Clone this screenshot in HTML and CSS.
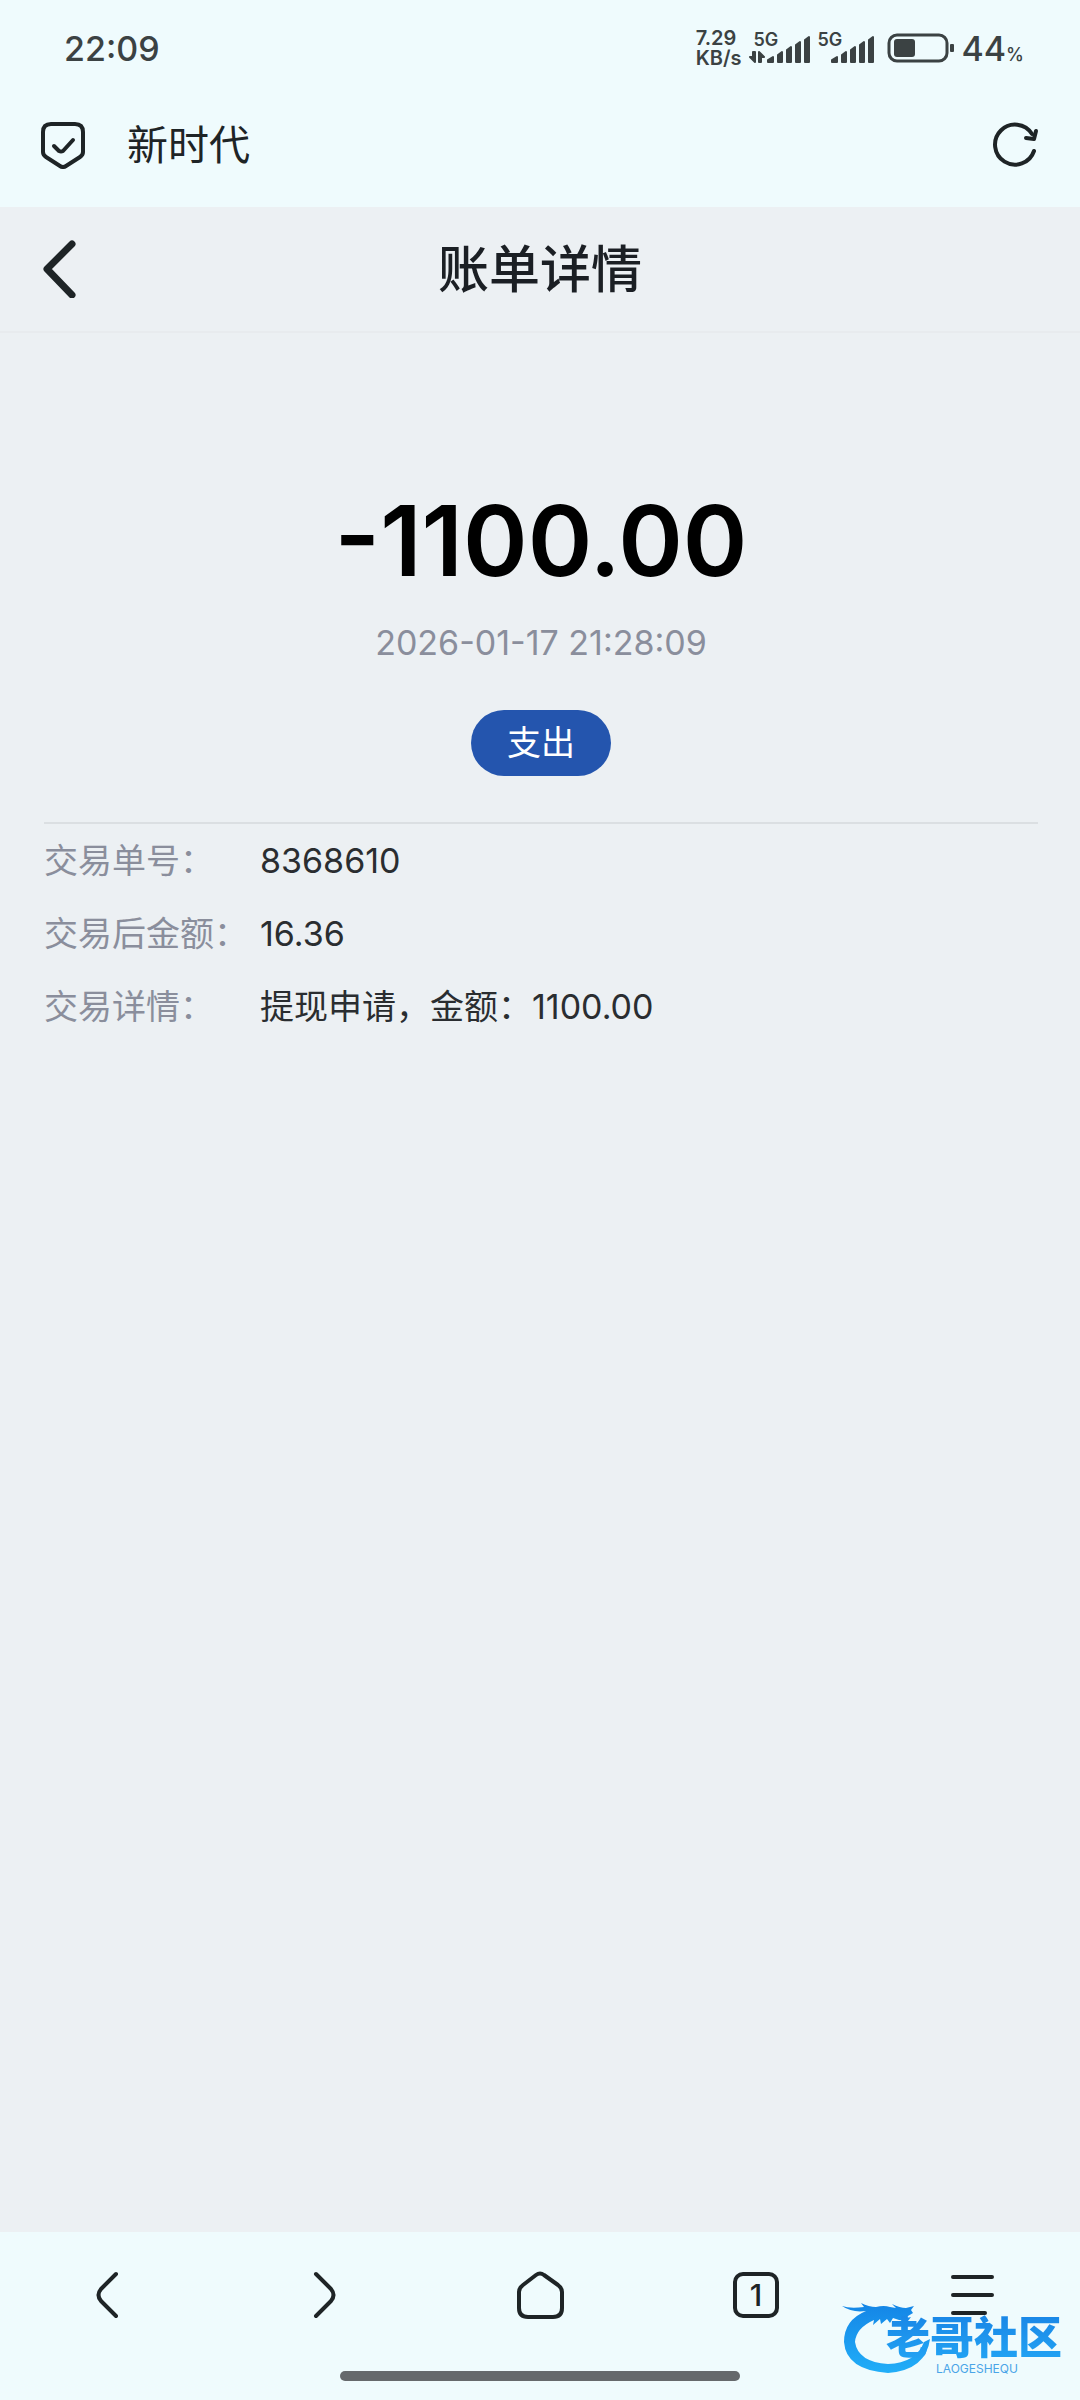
FILE: index.html
```html
<!DOCTYPE html>
<html lang="zh-CN">
<head>
    <meta charset="UTF-8">
    <meta name="viewport" content="width=device-width, initial-scale=1.0">
    <title>账单详情</title>
    <link rel="stylesheet" href="styles.css">
</head>
<body>
    <div class="status-bar">
        <span class="clock">22:09</span>
        <div class="status-right">
            <div class="speed">
                <span>7.29</span>
                <span>KB/s</span>
            </div>
            <div class="signal">
                <span class="signal-text">5G</span>
                <svg width="60" height="34" viewBox="0 0 60 34">
                    <path d="M4 21v10l-5-5h3v-5zM8 31v-10l5 5h-3v5z" class="signal-bars"/>
                    <path d="M17 31v-2l5-3v5zM27 31v-7l4-3v10zM36 31v-12l4-3v15zM45 31v-17l4-3v20zM54 31v-22l4-3v25z" class="signal-bars"/>
                </svg>
            </div>
            <div class="signal">
                <span class="signal-text">5G</span>
                <svg width="60" height="34" viewBox="0 0 60 34">
                    <path d="M17 31v-2l5-3v5zM27 31v-7l4-3v10zM36 31v-12l4-3v15zM45 31v-17l4-3v20zM54 31v-22l4-3v25z" class="signal-bars"/>
                </svg>
            </div>
            <svg class="battery" width="68" height="30" viewBox="0 0 68 30">
                <rect x="2" y="2" width="58" height="26" rx="8" fill="none" stroke="#3b4243" stroke-width="3"/>
                <rect x="7" y="6" width="21" height="18" rx="3" fill="#3b4243"/>
                <rect x="63" y="11" width="4" height="8" rx="1" fill="#3b4243"/>
            </svg>
            <span class="percent">44<small>%</small></span>
        </div>
    </div>

    <div class="address-bar">
        <svg width="44" height="48" viewBox="0 0 44 48" class="icon">
            <path d="M10 3h24q8 0 8 8v20q0 3-3 5L25 45q-3 2-6 0L5 36q-3-2-3-5V11q0-8 8-8z"/>
            <path d="M13 25l5 5q2 1 4 0L32 19"/>
        </svg>
        <span class="site-name">新时代</span>
        <button type="button" class="icon-button" aria-label="刷新">
            <svg width="46" height="46" viewBox="0 0 46 46" class="icon">
                <path d="M41 29A20 20 0 1 1 39 12"/>
                <path d="M43 9l-2 8-8-1"/>
            </svg>
        </button>
    </div>

    <header class="page-header">
        <button type="button" class="icon-button" aria-label="返回">
            <svg width="34" height="58" viewBox="0 0 34 58" class="icon icon-back">
                <path d="M30 4L5 29l25 26"/>
            </svg>
        </button>
        <h1>账单详情</h1>
    </header>

    <main class="bill">
        <div class="summary">
            <p class="amount">-1100.00</p>
            <p class="date">2026-01-17 21:28:09</p>
            <span class="tag">支出</span>
        </div>
        <dl class="details">
            <dt>交易单号：</dt>
            <dd>8368610</dd>
            <dt>交易后金额：</dt>
            <dd>16.36</dd>
            <dt>交易详情：</dt>
            <dd>提现申请，金额：1100.00</dd>
        </dl>
    </main>

    <footer class="bottom">
        <nav class="tabs">
            <button type="button" class="icon-button" aria-label="后退">
                <svg width="48" height="48" viewBox="0 0 48 48" class="icon">
                    <path d="M32 3L17 18q-5 6 0 12l15 15"/>
                </svg>
            </button>
            <button type="button" class="icon-button" aria-label="前进">
                <svg width="48" height="48" viewBox="0 0 48 48" class="icon">
                    <path d="M16 3l15 15q5 6 0 12L16 45"/>
                </svg>
            </button>
            <button type="button" class="icon-button" aria-label="主页">
                <svg width="48" height="48" viewBox="0 0 48 48" class="icon">
                    <path d="M20 4q4-3 8 0l14 10q4 3 4 7v16q0 9-9 9H12q-9 0-9-9V21q0-4 4-7z"/>
                </svg>
            </button>
            <button type="button" class="icon-button" aria-label="标签页">
                <span class="tab-count">1</span>
            </button>
            <button type="button" class="icon-button" aria-label="菜单">
                <svg width="48" height="48" viewBox="0 0 48 48" class="icon">
                    <path d="M5 6h39M5 24h39M5 42h32"/>
                </svg>
            </button>
        </nav>
        <div class="home-indicator"></div>
        <div class="watermark">
            <svg width="90" height="72" viewBox="0 0 90 72">
                <defs>
                    <linearGradient id="blue" x1="0" y1="0" x2="0" y2="1">
                        <stop offset="0" stop-color="#1485e6"/>
                        <stop offset="1" stop-color="#22aef8"/>
                    </linearGradient>
                </defs>
                <path fill="url(#blue)" d="M0 4q8 3 22 1l-3-4q8 4 15 4 8-2 14 0l6 1-4-4q8 4 14 4l8-2-3 4 2 3-5 3-6 1q5 1 9 0l-3 4-9-1-6-2-3 5-3-4-6 5-1-5-7 6 1-5Q14 26 13 40q3 20 33 22 28-1 36-22l6-3Q84 68 46 71 4 68 2 40 2 18 24 9 10 11 0 4z"/>
            </svg>
            <div class="watermark-text">
                <span class="watermark-name">老哥社区</span>
                <span class="watermark-latin">LAOGESHEQU</span>
            </div>
        </div>
    </footer>
</body>
</html>
```
FILE: styles.css
```css
* {
    box-sizing: border-box;
}
body {
    font-family: Inter, "Noto Sans CJK SC", sans-serif;
    background-color: #ecf0f3;
    color: #2a2d30;
    margin: 0;
    min-height: 100vh;
    display: flex;
    flex-direction: column;
}
.status-bar {
    display: flex;
    align-items: center;
    justify-content: space-between;
    height: 96px;
    padding: 0 56px 0 64px;
    background-color: #effbfd;
    color: #3b4243;
}
.clock {
    font-size: 34px;
    font-weight: 500;
}
.status-right {
    display: flex;
    align-items: center;
}
.speed {
    display: flex;
    flex-direction: column;
    margin-right: 10px;
    font-size: 20px;
    line-height: 20px;
    font-weight: 600;
}
/* the network label sits over the low bars */
.signal {
    display: grid;
    margin-right: 4px;
}
.signal > * {
    grid-area: 1 / 1;
}
.signal svg {
    overflow: visible;
}
.signal-text {
    padding-left: 2px;
    font-size: 18px;
    line-height: 18px;
    font-weight: 600;
}
.signal-bars {
    fill: #3b4243;
    stroke: #3b4243;
    stroke-width: 2;
    stroke-linejoin: round;
}
.battery {
    margin: 0 6px 0 8px;
}
.percent {
    font-size: 34px;
    font-weight: 500;
}
.percent small {
    font-size: 18px;
}
.address-bar {
    display: flex;
    align-items: center;
    height: 111px;
    padding: 0 41px 14px;
    background-color: #effbfd;
}
.site-name {
    flex: 1;
    margin-left: 42px;
    padding-bottom: 6px;
    font-size: 41px;
    color: #1e2426;
}
.icon {
    display: block;
    fill: none;
    stroke: #1e2426;
    stroke-width: 4;
    stroke-linecap: round;
    stroke-linejoin: round;
}
.icon-back {
    stroke-width: 7;
}
.icon-button {
    border: 0;
    padding: 0;
    background: none;
    font: inherit;
    color: #1e2426;
}
.page-header {
    display: grid;
    grid-template-columns: 1fr auto 1fr;
    align-items: center;
    height: 126px;
    padding: 0 42px;
    border-bottom: 2px solid #e8ebee;
}
.page-header .icon-button {
    justify-self: start;
}
.page-header h1 {
    margin: 0;
    padding-bottom: 6px;
    font-size: 51px;
    font-weight: 500;
    color: #1b1f24;
}
.bill {
    flex: 1;
    padding: 0 42px 0 44px;
}
.summary {
    display: flex;
    flex-direction: column;
    align-items: center;
    padding: 148px 0 46px;
    border-bottom: 2px solid #dbdfe2;
}
.amount {
    margin: 0;
    font-size: 98px;
    line-height: 120px;
    font-weight: 600;
    color: #000;
}
.date {
    margin: 20px 0 45px;
    font-size: 34px;
    line-height: 44px;
    color: #8a8e9c;
}
.tag {
    padding: 0 36px;
    border-radius: 33px;
    background-color: #2455ae;
    color: #fff;
    font-size: 34px;
    line-height: 66px;
}
.details {
    display: grid;
    grid-template-columns: auto 1fr;
    column-gap: 12px;
    margin: 0;
    font-size: 34px;
    line-height: 73px;
}
.details dt {
    color: #8a8e9c;
}
.details dd {
    margin: 0;
}
.bottom {
    position: relative;
    height: 168px;
    background-color: #effbfd;
}
.tabs {
    display: grid;
    grid-template-columns: repeat(5, 1fr);
    height: 126px;
}
.tabs .icon-button {
    display: flex;
    align-items: center;
    justify-content: center;
}
.tab-count {
    width: 46px;
    height: 46px;
    border: 4px solid #1e2426;
    border-radius: 10px;
    font-size: 30px;
    line-height: 38px;
    font-weight: 500;
}
.home-indicator {
    width: 400px;
    height: 10px;
    margin: 13px auto 0;
    border-radius: 5px;
    background-color: #65696c;
}
.watermark {
    position: absolute;
    right: 18px;
    bottom: 24px;
    display: flex;
}
.watermark-text {
    display: flex;
    flex-direction: column;
    margin: 12px 0 0 -46px;
}
.watermark-name {
    font-size: 44px;
    line-height: 48px;
    font-weight: 900;
    color: transparent;
    background: linear-gradient(#1a86e6, #22a4f4);
    background-clip: text;
}
.watermark-latin {
    margin-left: 50px;
    font-size: 12px;
    line-height: 14px;
    color: #4aa5e8;
}
```
